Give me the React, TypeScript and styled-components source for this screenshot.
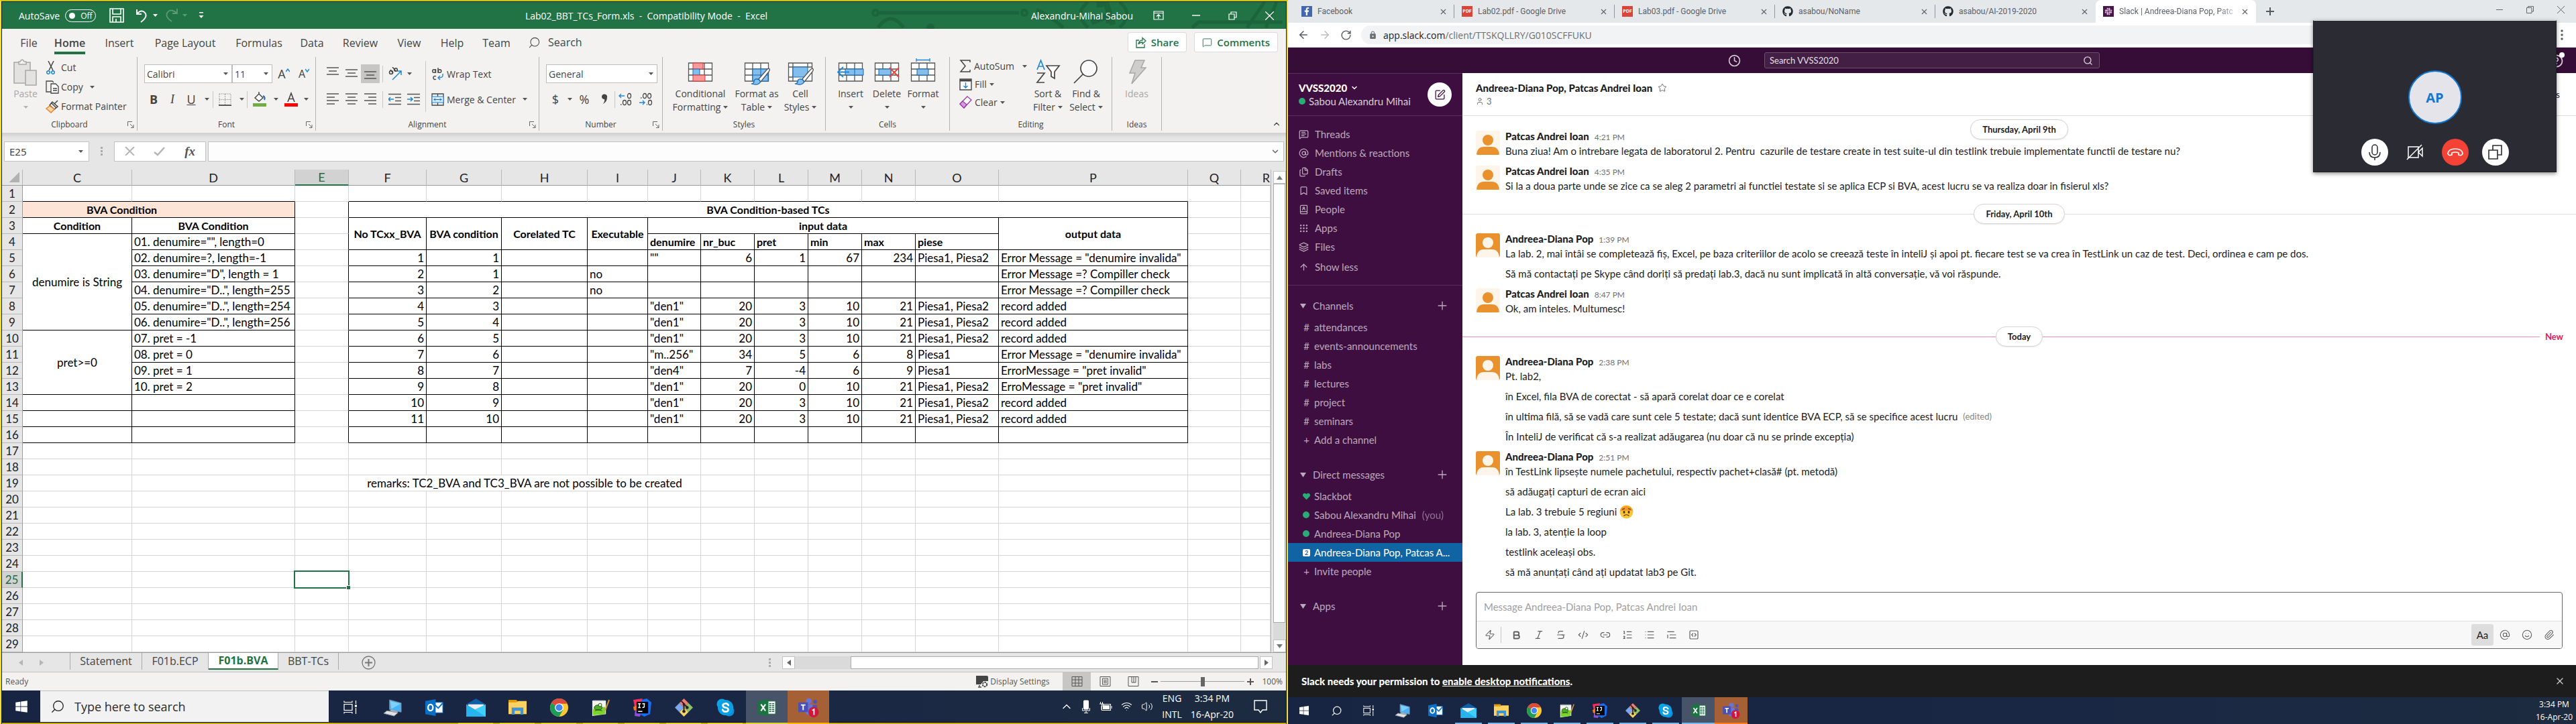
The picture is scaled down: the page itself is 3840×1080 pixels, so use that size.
import React from 'react';
import styled, { createGlobalStyle, css } from 'styled-components';
import {
  ArrowLeft, ArrowRight, ArrowUp, AtSign, Bold, Bookmark, Clock, CodeXml, Grip, Italic, Layers, Link2,
  List, ListOrdered, MessageSquareText, Paperclip, RotateCw, Search, Smile, SquarePen, SquareCode, Star, Strikethrough,
  TextQuote, User, X, Zap, Files, BookUser, Plus, ChevronDown, ChevronUp, MessageSquare, Wifi, Volume2,
} from 'lucide-react';
import { FaGithub, FaSlack, FaFacebookF, FaWindows, FaHeart } from 'react-icons/fa';
import { MdLock } from 'react-icons/md';

const UI = '"Open Sans", "Noto Sans", sans-serif';
const LATO = 'Lato, "Open Sans", sans-serif';

const Global = createGlobalStyle`
  * { box-sizing: border-box; }
  body { margin: 0; background: #000; overflow: hidden; }
  button, input, select { font: inherit; color: inherit; margin: 0; padding: 0; border: 0; background: none; outline: none; border-radius: 0; }
  svg { display: block; flex: none; }
`;

const Desktops = styled.div`
  position: relative;
  display: grid;
  grid-template-columns: 1fr 1fr;
  min-height: 100vh;
  font-family: ${UI};
`;
const Spacer = styled.span<{ $w?: number }>`
  flex: ${p => (p.$w ? `0 0 ${p.$w}px` : '1')};
`;
/* magnifier with its handle at the lower left */
const Magnifier = styled(Search)`
  transform: scaleX(-1);
`;

/* ───────── shared taskbar ───────── */
const TaskbarBox = styled.footer<{ $h: number; $framed?: boolean }>`
  display: flex;
  align-items: stretch;
  height: ${p => p.$h}px;
  color: #fff;
  background: linear-gradient(90deg, #182542, #1a2744 60%, #1d2b40);
  ${p => p.$framed && css`box-shadow: inset 0 -2px #c4a90e, inset 0 -3px #000;`}
`;
const TaskSlot = styled.button<{ $w: number; $bg?: string; $line?: string; $lineW?: number; $h: number }>`
  position: relative;
  display: grid;
  place-items: center;
  width: ${p => p.$w}px;
  height: ${p => p.$h}px;
  background: ${p => p.$bg || 'transparent'};
  ${p => p.$line && css`
    &::after {
      content: '';
      position: absolute;
      bottom: 0;
      left: 50%;
      width: ${p.$lineW}px;
      margin-left: -${(p.$lineW || 0) / 2}px;
      height: 2px;
      background: ${p.$line};
    }
  `}
`;

const PcIcon = ({ s }: { s: number }) => (
  <svg width={s} height={s} viewBox="0 0 28 28">
    <path d="M9 2 L27 7 V21 L9 17Z" fill="#49b4f5" stroke="#7d8b99" strokeWidth="1" />
    <path d="M10 4 L26 8 L12 16Z" fill="#7fd0ff" />
    <path d="M12 17 L22 20 L20 24 L8 20Z" fill="#aab0b8" />
    <path d="M5 19 L22 22 L16 27 L0 23Z" fill="#dfe3e8" stroke="#8a939d" strokeWidth="1" />
  </svg>
);
const OutlookIcon = ({ s }: { s: number }) => (
  <svg width={s} height={s} viewBox="0 0 28 28">
    <rect x="14" y="6" width="13" height="16" fill="#fff" stroke="#0a72c9" />
    <path d="M14 9 L20 15 L27 7" fill="none" stroke="#0a72c9" strokeWidth="2" />
    <path d="M0 4 L16 1 V27 L0 24Z" fill="#0a6fc5" />
    <ellipse cx="8" cy="14" rx="3.8" ry="4.8" fill="none" stroke="#fff" strokeWidth="2.4" />
  </svg>
);
const MailIcon = ({ s }: { s: number }) => (
  <svg width={s + 2} height={s} viewBox="0 0 30 28">
    <path d="M0 9 L15 0 L30 9 V14 H0Z" fill="#0f5ea8" />
    <path d="M3 9 H27 V19 H3Z" fill="#eef0f2" />
    <path d="M0 9 L15 18 L30 9 V28 H0Z" fill="#27b4ee" />
    <path d="M30 9 V28 L13 17Z" fill="#3ed0fa" />
  </svg>
);
const FolderIcon = ({ s }: { s: number }) => (
  <svg width={s} height={s} viewBox="0 0 28 28">
    <path d="M0 2 H12 L14 4 V8 H0Z" fill="#e09b0a" />
    <path d="M0 6 H12 L15 4 H28 V24 H0Z" fill="#fdd160" />
    <path d="M5 25 V14 H23 V25 H18.500 V19 H9.500 V25Z" fill="#3f95d4" />
  </svg>
);
const ChromeIcon = ({ s }: { s: number }) => (
  <svg width={s} height={s} viewBox="0 0 28 28">
    <circle cx="14" cy="14" r="14" fill="#fcc934" />
    <path d="M14 14 L1.900 7 A14 14 0 0 0 14 28 L20 17.500Z" fill="#1c9c58" />
    <path d="M14 14 L1.900 7 A14 14 0 0 1 26.100 7 L26 8 H14Z" fill="#dc4a3d" />
    <circle cx="14" cy="14" r="6.600" fill="#fff" />
    <circle cx="14" cy="14" r="5.300" fill="#4285f4" />
  </svg>
);
const NotepadIcon = ({ s }: { s: number }) => (
  <svg width={s} height={s} viewBox="0 0 28 28">
    <path d="M1 3 H22 L22 24 L1 27Z" fill="#f2f4ee" />
    <path d="M2 16 L21 13 V24 L2 26Z" fill="#7bd32b" />
    <path d="M3 3 H20" stroke="#8b9298" strokeWidth="2" strokeDasharray="1 1" />
    <ellipse cx="10" cy="14" rx="6" ry="4" fill="#4fae26" stroke="#234a17" />
    <circle cx="13" cy="10" r="2.500" fill="#e5f3d7" stroke="#234a17" />
    <path d="M5 19 L10 17 L16 19" stroke="#234a17" fill="none" />
    <path d="M27 2 L21 18" stroke="#cf9528" strokeWidth="2" />
  </svg>
);
const IdeaIcon = ({ s }: { s: number }) => (
  <svg width={s} height={s} viewBox="0 0 28 28">
    <path d="M0 2 L14 0 L12 14 L2 12Z" fill="#fb2d5c" />
    <path d="M0 13 L6 10 L6 20 L1 18Z" fill="#f77a1c" />
    <path d="M3 18 L14 20 L10 28 L2 27Z" fill="#8f4fd6" />
    <path d="M13 2 L21 0 L28 6 L26 24 L17 28 L10 24Z" fill="#1a6df0" />
    <rect x="5" y="5" width="18" height="18" fill="#050505" />
    <path d="M7.500 8 H11.500 M9.500 8 V14 M7.500 14 H11.500 M14 8 H18 M17 8 V12.500 Q17 14 14 14 M7.500 20 H14" stroke="#fff" strokeWidth="1.500" fill="none" />
  </svg>
);
const GitIcon = ({ s }: { s: number }) => (
  <svg width={s} height={s} viewBox="0 0 28 28">
    <path d="M14 0 L21 7 L14 14 L7 7Z" fill="#f27b72" />
    <path d="M7 7 L14 14 L7 21 L0 14Z" fill="#7aa7f0" />
    <path d="M21 7 L28 14 L21 21 L14 14Z" fill="#8cc06a" />
    <path d="M14 14 L21 21 L14 28 L7 21Z" fill="#f5d368" />
    <path d="M10 4 L14 8 V21 M14 9 L19 13" stroke="#26231f" strokeWidth="2" fill="none" />
    <circle cx="14" cy="9" r="2" fill="#26231f" /><circle cx="19" cy="14" r="2.400" fill="#26231f" /><circle cx="14" cy="20" r="2.400" fill="#26231f" />
  </svg>
);
const SkypeIcon = ({ s }: { s: number }) => (
  <svg width={s} height={s} viewBox="0 0 28 28">
    <circle cx="8.500" cy="8.500" r="8" fill="#0aa7ea" /><circle cx="19.500" cy="19.500" r="8" fill="#0a8fdc" /><circle cx="14" cy="14" r="12" fill="#0aa0e6" />
    <path d="M18.500 10.500 Q17 7.500 14 7.700 Q9.800 8 9.900 10.800 Q10 13.200 14 14 Q18.500 15 18.300 17.500 Q18 20.400 14 20.400 Q10.500 20.400 9.500 17.300" fill="none" stroke="#fff" strokeWidth="2.700" strokeLinecap="round" />
  </svg>
);
const ExcelIcon = ({ s }: { s: number }) => (
  <svg width={s} height={s} viewBox="0 0 28 28">
    <rect x="14" y="4" width="13" height="20" fill="#fff" stroke="#1e7145" />
    <path d="M17 8 H25 M17 11 H25 M17 14 H25 M17 17 H25 M17 20 H25" stroke="#1e7145" strokeWidth="1.600" strokeDasharray="3.500 1" />
    <path d="M0 4 L16 1 V27 L0 24Z" fill="#1a7340" />
    <path d="M4.500 9 L11.500 19 M11.500 9 L4.500 19" stroke="#fff" strokeWidth="2.200" />
  </svg>
);
const TeamsIcon = ({ s }: { s: number }) => (
  <svg width={s + 4} height={s + 2} viewBox="0 0 32 30">
    <circle cx="16" cy="5" r="4.500" fill="#6a74d6" /><circle cx="26" cy="6" r="3" fill="#4b54bb" />
    <path d="M10 10 H22 V19 Q22 26 15 26 Q10 25 10 20Z" fill="#6a74d6" /><path d="M22 11 H29 V19 Q28 22 24 22Z" fill="#4b54bb" />
    <rect x="0" y="7" width="15" height="15" rx="1" fill="#4951b8" />
    <path d="M4 11 H11 M7.500 11 V19" stroke="#fff" strokeWidth="2" />
    <circle cx="23.500" cy="22" r="8" fill="#d0163c" />
    <path d="M21.500 19.500 L24.200 17.700 V26.500" stroke="#fff" strokeWidth="1.900" fill="none" />
  </svg>
);
const TaskViewIcon = ({ s }: { s: number }) => (
  <svg width={s} height={s} viewBox="0 0 20 20" fill="none" stroke="#fff" strokeWidth="1.200">
    <rect x="1" y="5.500" width="12" height="9" /><path d="M1 0.500 V2.500 H13 V0.500 M1 19.500 V17.500 H13 V19.500 M18.500 0 V5 M18.500 11 V20" /><rect x="17.500" y="7" width="2" height="2" fill="#fff" />
  </svg>
);

const APPS: { n: string; I: React.FC<{ s: number }>; run?: boolean; bg?: string; hot?: boolean }[] = [
  { n: 'This PC', I: PcIcon },
  { n: 'Outlook', I: OutlookIcon },
  { n: 'Mail', I: MailIcon, run: true },
  { n: 'File Explorer', I: FolderIcon, run: true },
  { n: 'Chrome', I: ChromeIcon, run: true },
  { n: 'Notepad++', I: NotepadIcon, run: true },
  { n: 'IntelliJ IDEA', I: IdeaIcon, run: true },
  { n: 'Git', I: GitIcon, run: true },
  { n: 'Skype', I: SkypeIcon, run: true },
  { n: 'Excel', I: ExcelIcon, run: true, bg: '#465369' },
  { n: 'Teams', I: TeamsIcon, run: true, bg: '#a56035', hot: true },
];

const TaskSearch = styled.label`
  display: flex;
  align-items: center;
  gap: 14px;
  width: 430px;
  height: 47px;
  padding-left: 15px;
  background: #f2f2f2;
  border-top: 1px solid #c4c4c4;
  color: #1f1f1f;
  font-size: 18px;
  input { flex: 1; min-width: 0; }
  input::placeholder { color: #2b2b2b; opacity: 1; }
`;
const Tray = styled.div<{ $pr: number }>`
  display: flex;
  align-items: center;
  gap: 13px;
  margin-left: auto;
  padding-right: ${p => p.$pr}px;
  height: 47px;
`;
const TrayText = styled.div<{ $s: number; $lh: number }>`
  font-size: ${p => p.$s}px;
  line-height: ${p => p.$lh}px;
  text-align: center;
  white-space: nowrap;
`;
const SmallTray = styled(Tray)`
  height: 40px;
`;

/* ───────── Excel ───────── */
const ExcelHalf = styled.section`
  display: flex;
  flex-direction: column;
  min-width: 0;
  background: #e6e6e6;
  border: solid;
  border-width: 2px 2px 0 2px;
  border-color: #c9c21a #f0dc45 #c9a90e #f2dd2e;
`;
const ExcelInner = styled.div`
  display: flex;
  flex-direction: column;
  flex: 1;
  border: 1px solid #16241c;
  border-bottom: 0;
  min-width: 0;
`;
const TitleBar = styled.header`
  position: relative;
  display: flex;
  align-items: center;
  justify-content: space-between;
  height: 40px;
  background: #217346;
  color: #fff;
  font-size: 14px;
`;
const Circuit = styled.svg`
  position: absolute;
  right: 0;
  top: 0;
`;
const Quick = styled.div`
  display: flex;
  align-items: center;
  gap: 8px;
  padding-left: 25px;
  flex: 1;
`;
const Toggle = styled.button`
  display: flex;
  align-items: center;
  gap: 8px;
  width: 46px;
  height: 19px;
  padding-left: 5px;
  border: 1px solid #fff;
  border-radius: 10px;
  font-size: 12px;
  margin-right: 12px;
  && { padding-left: 5px; }
  &::before { content: ''; width: 9px; height: 9px; border-radius: 50%; background: #fff; }
`;
const DocTitle = styled.div`
  white-space: pre;
`;
const WinSide = styled.div`
  position: relative;
  display: flex;
  align-items: center;
  justify-content: flex-end;
  flex: 1;
  gap: 42px;
  padding-right: 18px;
`;
const Owner = styled.span`
  margin-right: -12px;
`;
const RibbonTabs = styled.nav`
  display: flex;
  align-items: center;
  height: 40px;
  padding: 0 12px 0 17px;
  background: #f3f2f1;
  color: #444;
  font-size: 16px;
`;
const RTab = styled.button<{ $on?: boolean; $w: number }>`
  width: ${p => p.$w}px;
  height: 40px;
  text-align: center;
  white-space: nowrap;
  font-weight: ${p => (p.$on ? 600 : 400)};
  span { display: inline-block; height: 36px; line-height: 38px; border-bottom: ${p => (p.$on ? '4px solid #217346' : '0')}; }
`;
const RibbonSearch = styled.label`
  display: flex;
  align-items: center;
  gap: 11px;
  padding-left: 13px;
  input { width: 120px; }
  input::placeholder { color: #444; opacity: 1; }
`;
const Pill = styled.button`
  display: flex;
  align-items: center;
  justify-content: center;
  gap: 7px;
  height: 30px;
  padding: 0 11px;
  margin-left: 11px;
  background: #fff;
  border: 1px solid #dcdad8;
  border-radius: 3px;
  color: #217346;
  font-size: 15px;
  font-weight: 600;
`;
const Ribbon = styled.div`
  display: flex;
  height: 115px;
  background: #f3f2f1;
  color: #444;
  font-size: 14px;
`;
const Group = styled.section<{ $w: number }>`
  display: flex;
  flex-direction: column;
  width: ${p => p.$w}px;
  height: 110px;
  margin-top: 2px;
  border-right: 1px solid #b5b3b1;
`;
const GBody = styled.div<{ $pl?: number }>`
  display: flex;
  align-items: flex-start;
  height: 92px;
  padding-left: ${p => p.$pl || 0}px;
`;
const GLabel = styled.div`
  position: relative;
  height: 18px;
  line-height: 18px;
  text-align: center;
  font-size: 12px;
`;
const Launch = styled.button`
  position: absolute;
  right: 4px;
  top: 4px;
`;
const Big = styled.button<{ $w: number; $dim?: boolean }>`
  display: flex;
  flex-direction: column;
  align-items: center;
  width: ${p => p.$w}px;
  height: 92px;
  color: ${p => (p.$dim ? '#a9a7a5' : 'inherit')};
  line-height: 20px;
  white-space: nowrap;
  svg.art { height: 38px; width: 40px; margin: 2px 0 5px; overflow: visible; }
`;
const BigLine = styled.span`
  display: flex;
  align-items: center;
  gap: 4px;
  height: 20px;
`;
const Stack = styled.div<{ $pt?: number; $pl?: number; $w?: number; $h: number }>`
  display: flex;
  flex-direction: column;
  ${p => p.$w && css`width: ${p.$w}px;`}
  padding: ${p => p.$pt || 0}px 0 0 ${p => p.$pl || 0}px;
  > * { height: ${p => p.$h}px; }
`;
const Small = styled.button<{ $gap?: number }>`
  display: flex;
  align-items: center;
  gap: ${p => p.$gap ?? 2}px;
  white-space: nowrap;
`;
const IconRow = styled.div`
  display: flex;
  align-items: center;
`;
const IconBtn = styled.button<{ $w?: number; $on?: boolean; $s?: number }>`
  display: flex;
  align-items: center;
  justify-content: center;
  width: ${p => p.$w || 28}px;
  height: 28px;
  font-size: ${p => p.$s || 18}px;
  background: ${p => (p.$on ? '#c8c6c4' : 'transparent')};
  i { font-family: "Liberation Serif", serif; }
`;
const CollapseBtn = styled(IconBtn)`
  margin: 88px 0 0 auto;
`;
const AddSheet = styled(IconBtn)`
  margin-left: 30px;
`;
const Rule = styled.span<{ $h?: number; $c?: string }>`
  width: 1px;
  height: ${p => p.$h || 25}px;
  background: ${p => p.$c || '#c9c7c5'};
`;
const TallRule = styled(Rule)`
  margin: 6px 0 0 4px;
`;
const Picker = styled.div<{ $w: number }>`
  position: relative;
  display: flex;
  align-items: center;
  width: ${p => p.$w}px;
  height: 28px;
  background: #fff;
  border: 1px solid #bfbdbb;
  select { appearance: none; flex: 1; height: 26px; padding-left: 3px; font-size: 14px; }
  svg { position: absolute; right: 5px; top: 11px; pointer-events: none; }
`;

const Caret = ({ c = '#555' }: { c?: string }) => (
  <svg width="7" height="4" viewBox="0 0 7 4"><path d="M0 0 H7 L3.500 4Z" fill={c} /></svg>
);
const LaunchIcon = () => (
  <svg width="10" height="10" viewBox="0 0 10 10" fill="none" stroke="#666"><path d="M0.500 7 V0.500 H7 M4 4 L9 9 M9 5 V9.500 H5" /></svg>
);
const ShareIcon = () => (
  <svg width="16" height="17" viewBox="0 0 16 17" fill="none" stroke="#217346" strokeWidth="1.300"><path d="M5 5 H1 V16 H13 V11 M4 11 Q5 5 10 5 V1.500 L15 6 L10 10.500 V8 Q6 8 4 11Z" /></svg>
);
const GridArt = ({ children }: { children?: React.ReactNode }) => (
  <svg className="art" viewBox="0 0 40 38">
    <path d="M2.500 7 H37.500 V34 H2.500Z" fill="#fff" />
    <path d="M2.500 7 H37.500 V34 H2.500Z M2.500 16 H37.500 M2.500 25 H37.500 M14 7 V34 M26 7 V34" fill="none" stroke="#555" strokeWidth="1.300" />
    {children}
  </svg>
);
const Brush = () => (
  <g>
    <path d="M39 16 Q38 14 35 17 L22 32 L26 35 L38 20 Q40 17 39 16Z" fill="#fff" stroke="#555" strokeWidth="1.300" />
    <path d="M12 38 Q16 38 16 34 Q17 30 21 31 Q26 32 25 36 Q22 41 12 38Z" fill="#83beec" stroke="#1068b4" strokeWidth="1.300" />
  </g>
);
const Lines = ({ a, y = 0 }: { a: 'l' | 'c' | 'r' | 't'; y?: number }) => {
  const rows = a === 't' ? [[0, 18], [3, 15], [0, 18]] : a === 'l' ? [[0, 18], [0, 12], [0, 18], [0, 12]] : a === 'c' ? [[0, 18], [3, 15], [0, 18], [3, 15]] : [[0, 18], [6, 18], [0, 18], [6, 18]];
  return (
    <svg width="18" height="22" viewBox="0 0 18 22" stroke="#555" strokeWidth="1.500">
      {rows.map(([x1, x2], i) => <path key={i} d={`M${x1} ${(a === 't' ? 5 + y : 3) + i * 5} H${x2}`} />)}
    </svg>
  );
};
const Indent = ({ right }: { right?: boolean }) => (
  <svg width="19" height="18" viewBox="0 0 19 18" stroke="#555" strokeWidth="1.500" fill="none">
    <path d="M0 1.500 H19 M10 6.500 H19 M10 11.500 H19 M0 16.500 H19" />
    <path d={right ? 'M0 9 H8 M5 6 L8 9 L5 12' : 'M8 9 H0 M3 6 L0 9 L3 12'} stroke="#1d86d6" />
  </svg>
);

const FormulaBar = styled.div`
  display: flex;
  align-items: center;
  height: 55px;
  padding: 0 3px 0 3px;
  background: linear-gradient(#cfcfcf, #e6e6e6 8px);
`;
const NameBox = styled.div`
  display: flex;
  align-items: center;
  width: 127px;
  height: 30px;
  padding: 0 8px 0 7px;
  background: #fff;
  border: 1px solid #c3c3c3;
  font-size: 15px;
  color: #333;
  input { flex: 1; min-width: 0; }
`;
const Dots = styled.span`
  width: 3px;
  height: 13px;
  margin: 0 17px;
  background: repeating-linear-gradient(#aaa 0 3px, transparent 3px 5px);
`;
const FxBox = styled.div`
  display: flex;
  align-items: center;
  justify-content: space-between;
  width: 137px;
  height: 30px;
  padding: 0 15px;
  background: #fff;
  border: 1px solid #c3c3c3;
`;
const Fx = styled.i`
  font: italic 600 19px "Liberation Serif", serif;
  color: #555;
`;
const FormulaInput = styled.div`
  display: flex;
  align-items: center;
  flex: 1;
  height: 30px;
  margin-left: 3px;
  padding-right: 5px;
  background: #fdfdfd;
  border: 1px solid #c3c3c3;
  input { flex: 1; }
`;

const SheetArea = styled.div`
  display: flex;
  align-items: flex-start;
  height: 720px;
`;
const Grid = styled.table`
  flex: 1;
  min-width: 0;
  table-layout: fixed;
  border-collapse: separate;
  border-spacing: 0;
  font: 17px/23px ${LATO};
  color: #000;
  background: #fff;
  th, td { height: 24px; padding: 0; }
`;
const Col = styled.col<{ $w: number }>`
  width: ${p => p.$w}px;
`;
const ColHead = styled.th<{ $on?: boolean; $end?: boolean }>`
  font-size: 18px;
  font-weight: 400;
  color: ${p => (p.$on ? '#1f6b41' : '#222')};
  background: ${p => (p.$on ? '#d2d2d2' : '#e6e6e6')};
  border-right: 1px solid ${p => (p.$end ? 'transparent' : '#b8b8b8')};
  border-bottom: ${p => (p.$on ? '2px solid #217346' : '1px solid #9b9b9b')};
  text-align: ${p => (p.$end ? 'right' : 'center')};
  line-height: 22px;
`;
const Corner = styled(ColHead)`
  background: linear-gradient(135deg, #e6e6e6 50%, #b2b2b2 50%) 10px 3px / 16px 16px no-repeat #e6e6e6;
`;
const RowHead = styled.th<{ $on?: boolean }>`
  font-weight: 400;
  text-align: center;
  color: ${p => (p.$on ? '#1f6b41' : '#222')};
  background: ${p => (p.$on ? '#d2d2d2' : '#e6e6e6')};
  border-bottom: 1px solid #b8b8b8;
  border-right: ${p => (p.$on ? '2px solid #217346' : '1px solid #9b9b9b')};
`;
type CellProps = { $r?: boolean; $b?: boolean; $bold?: boolean; $al?: string; $bg?: string; $pr?: number };
const Cell = styled.td<CellProps>`
  && { padding: 0 ${p => p.$pr ?? 3}px 0 3px; }
  border-right: 1px solid ${p => (p.$r ? '#000' : '#d4d4d4')};
  border-bottom: 1px solid ${p => (p.$b ? '#000' : '#d4d4d4')};
  font-size: ${p => (p.$bold ? 16 : 17)}px;
  font-weight: ${p => (p.$bold ? 700 : 400)};
  text-align: ${p => p.$al || 'left'};
  background: ${p => p.$bg || 'transparent'};
  white-space: nowrap;
`;
const Selected = styled.td`
  position: relative;
  border-right: 1px solid #d4d4d4;
  border-bottom: 1px solid #d4d4d4;
  &::before { content: ''; position: absolute; inset: -2px; border: 2px solid #217346; }
  &::after { content: ''; position: absolute; right: -3px; bottom: -3px; width: 5px; height: 5px; background: #217346; border: solid #fff; border-width: 1px 0 0 1px; }
`;
const VScroll = styled.div`
  display: flex;
  flex-direction: column;
  width: 23px;
  height: 720px;
  padding: 2px 1px 0 3px;
  background: #e6e6e6;
  border-left: 1px solid #b8b8b8;
`;
const ScrollBtn = styled.button`
  display: grid;
  place-items: center;
  width: 19px;
  height: 19px;
  background: #fff;
  border: 1px solid #c3c3c3;
`;
const VTrack = styled.div`
  flex: 1;
  background: #dadada;
`;
const VThumb = styled.div`
  height: 655px;
  background: #fff;
  border: 1px solid #ababab;
`;

const HEAD = ['C', 'D', 'E', 'F', 'G', 'H', 'I', 'J', 'K', 'L', 'M', 'N', 'O', 'P', 'Q', 'R'];
const COLW = [31, 163, 243, 80, 116, 112, 128, 90, 79, 80, 80, 80, 80, 124, 282, 79];
const CONDS = [
  '01. denumire="", length=0', '02. denumire=?, length=-1', '03. denumire="D", length = 1', '04. denumire="D..", length=255',
  '05. denumire="D..", length=254', '06. denumire="D..", length=256', '07. pret = -1', '08. pret = 0', '09. pret = 1', '10. pret = 2', '', '', '',
];
const INV = 'Error Message = "denumire invalida"';
const TCS: string[][] = [
  ['1', '1', '', '', '""', '6', '1', '67', '234', 'Piesa1, Piesa2', INV],
  ['2', '1', '', 'no', '', '', '', '', '', '', 'Error Message =? Compiller check'],
  ['3', '2', '', 'no', '', '', '', '', '', '', 'Error Message =? Compiller check'],
  ['4', '3', '', '', '"den1"', '20', '3', '10', '21', 'Piesa1, Piesa2', 'record added'],
  ['5', '4', '', '', '"den1"', '20', '3', '10', '21', 'Piesa1, Piesa2', 'record added'],
  ['6', '5', '', '', '"den1"', '20', '3', '10', '21', 'Piesa1, Piesa2', 'record added'],
  ['7', '6', '', '', '"m..256"', '34', '5', '6', '8', 'Piesa1', INV],
  ['8', '7', '', '', '"den4"', '7', '-4', '6', '9', 'Piesa1', 'ErrorMessage = "pret invalid"'],
  ['9', '8', '', '', '"den1"', '20', '0', '10', '21', 'Piesa1, Piesa2', 'ErroMessage = "pret invalid"'],
  ['10', '9', '', '', '"den1"', '20', '3', '10', '21', 'Piesa1, Piesa2', 'record added'],
  ['11', '10', '', '', '"den1"', '20', '3', '10', '21', 'Piesa1, Piesa2', 'record added'],
  ['', '', '', '', '', '', '', '', '', '', ''],
];
const NUMERIC = [0, 1, 5, 6, 7, 8];

const blanks = (n: number, key: string, props: CellProps = {}) =>
  Array.from({ length: n }, (_, i) => <Cell key={key + i} {...props} />);

function SheetRow({ n }: { n: number }) {
  const head = <RowHead scope="row" $on={n === 25}>{n}</RowHead>;
  const box = { $r: true, $b: true };
  if (n === 1) return <tr>{head}<Cell $b /><Cell $b /><Cell />{blanks(11, 'a', { $b: true })}{blanks(2, 'z')}</tr>;
  if (n === 2) return (
    <tr>{head}<Cell {...box} colSpan={2} $bold $al="center" $bg="#fce4d6" $pr={113}>BVA Condition</Cell><Cell $r />
      <Cell {...box} colSpan={11} $bold $al="center">BVA Condition-based TCs</Cell>{blanks(2, 'z')}</tr>
  );
  if (n === 3) return (
    <tr>{head}<Cell {...box} $bold $al="center">Condition</Cell><Cell {...box} $bold $al="center">BVA Condition</Cell><Cell $r />
      {['No TCxx_BVA', 'BVA condition', 'Corelated TC', 'Executable'].map(t => <Cell key={t} {...box} rowSpan={2} $bold $al="center">{t}</Cell>)}
      <Cell {...box} colSpan={6} $bold $al="center">input data</Cell><Cell {...box} rowSpan={2} $bold $al="center">output data</Cell>{blanks(2, 'z')}</tr>
  );
  if (n <= 16) return (
    <tr>{head}
      {n === 4 && <Cell {...box} rowSpan={6} $al="center">denumire is String</Cell>}
      {n === 10 && <Cell {...box} rowSpan={4} $al="center">pret&gt;=0</Cell>}
      {n >= 14 && <Cell {...box} />}
      <Cell {...box}>{CONDS[n - 4]}</Cell><Cell $r />
      {n === 4
        ? ['denumire', 'nr_buc', 'pret', 'min', 'max', 'piese'].map(t => <Cell key={t} {...box} $bold>{t}</Cell>)
        : TCS[n - 5].map((t, i) => <Cell key={i} {...box} $al={NUMERIC.includes(i) ? 'right' : 'left'}>{t}</Cell>)}
      {blanks(2, 'z')}
    </tr>
  );
  if (n === 19) return <tr>{head}{blanks(3, 'a')}<Cell colSpan={5} $al="center">remarks: TC2_BVA and TC3_BVA are not possible to be created</Cell>{blanks(8, 'z')}</tr>;
  if (n === 25) return <tr>{head}{blanks(2, 'a')}<Selected />{blanks(13, 'z')}</tr>;
  return <tr>{head}{blanks(16, 'a')}</tr>;
}

const SheetTabs = styled.div`
  display: flex;
  align-items: flex-start;
  height: 30px;
  background: #e6e6e6;
  border-top: 1px solid #9b9b9b;
  border-bottom: 1px solid #c3c3c3;
  color: #444;
  font-size: 16px;
`;
const TabArrows = styled.div`
  display: flex;
  gap: 25px;
  width: 101px;
  height: 28px;
  padding-left: 25px;
  align-items: center;
`;
const STab = styled.button<{ $w: number; $on?: boolean }>`
  width: ${p => p.$w}px;
  height: 25px;
  line-height: 21px;
  white-space: nowrap;
  && { border-right: 1px solid #ababab; }
  ${p => p.$on && css`
    background: #fff;
    color: #217346;
    font-weight: 700;
    && { border-bottom: 2px solid #217346; }
  `}
`;
const HScroll = styled.div`
  display: flex;
  align-items: center;
  margin-left: auto;
  height: 28px;
  padding-right: 20px;
`;
const HTrack = styled.div`
  display: flex;
  justify-content: flex-end;
  width: 691px;
  height: 19px;
  margin-right: 2px;
  background: #dadada;
`;
const HThumb = styled.div`
  width: 608px;
  background: #fff;
  border: 1px solid #ababab;
`;
const Status = styled.div`
  display: flex;
  align-items: center;
  height: 27px;
  padding: 0 5px;
  background: #f3f2f1;
  color: #555;
  font-size: 12px;
`;
const DisplaySettings = styled(Small)`
  margin: 0 20px 0 auto;
`;
const Zoom = styled.input`
  appearance: none;
  width: 125px;
  height: 14px;
  background: linear-gradient(#a0a0a0, #a0a0a0) center / 100% 1px no-repeat;
  &::-webkit-slider-thumb { appearance: none; width: 6px; height: 14px; background: #666; }
`;
const ViewBtn = styled.button<{ $on?: boolean }>`
  display: grid;
  place-items: center;
  width: 42px;
  height: 27px;
  background: ${p => (p.$on ? '#c8c6c4' : 'transparent')};
`;

const RIBBON_TABS: [string, number][] = [['File', 46], ['Home', 76], ['Insert', 72], ['Page Layout', 124], ['Formulas', 96], ['Data', 62], ['Review', 82], ['View', 64], ['Help', 64], ['Team', 68]];

function Excel() {
  return (
    <ExcelHalf>
      <ExcelInner>
        <TitleBar>
          <Circuit width="620" height="40" viewBox="0 0 620 40" fill="none" stroke="#1c643c" strokeWidth="5">
            <circle cx="8" cy="16" r="4" strokeWidth="4" /><path d="M14 16 H222" /><circle cx="230" cy="16" r="4" strokeWidth="4" />
            <path d="M248 12 Q262 16 288 38 M12 38 Q30 12 50 38" /><circle cx="90" cy="38" r="6" fill="#1c643c" stroke="none" />
            <path d="M325 0 Q302 18 325 38 M372 0 Q394 18 372 38" /><path d="M342 8 V2 H352 L362 34 M330 30 L356 20 V32" strokeWidth="9" />
            <path d="M480 38 L490 30 H615 M562 38 L588 0 M590 38 L606 0" />
          </Circuit>
          <Quick>
            AutoSave
            <Toggle>Off</Toggle>
            <svg width="22" height="22" viewBox="0 0 22 22" fill="none" stroke="#fff" strokeWidth="1.600"><path d="M1 1 H21 V21 H1Z M5 1 V9 H17 V1 M5 21 V13 H17 V21 M10 21 V16" /></svg>
            <svg width="44" height="22" viewBox="0 0 44 22" fill="none" stroke="#fff" strokeWidth="2"><path d="M11 2 V9 H18 M11 9 Q17 2 22 6 Q29 12 17 21" /><path d="M35 9 H42 L38.500 13Z" fill="#fff" stroke="none" /></svg>
            <svg width="36" height="22" viewBox="0 0 36 22" fill="none" stroke="#5d9a77" strokeWidth="1.800"><path d="M19 1 V8 H12 M19 8 Q10 0 5 6 Q0 13 11 20" /><path d="M27 9 H34 L30.500 13Z" fill="#5d9a77" stroke="none" /></svg>
            <svg width="20" height="10" viewBox="0 0 20 10" fill="#fff"><path d="M8 0 H14 V1.500 H8Z M7.500 5 H14.500 L11 9Z" /></svg>
          </Quick>
          <DocTitle>Lab02_BBT_TCs_Form.xls  -  Compatibility Mode  -  Excel</DocTitle>
          <WinSide>
            <Owner>Alexandru-Mihai Sabou</Owner>
            <svg width="16" height="14" viewBox="0 0 16 14" fill="none" stroke="#fff" strokeWidth="1.200"><path d="M1 1 H15 V13 H1Z M1 3.500 H15 M8 12 V6 M5 8.500 L8 5.500 L11 8.500" /></svg>
            <svg width="12" height="12" viewBox="0 0 12 12"><path d="M0 6 H12" stroke="#fff" strokeWidth="1.400" /></svg>
            <svg width="13" height="13" viewBox="0 0 13 13" fill="none" stroke="#fff" strokeWidth="1.200"><path d="M1 4 H9 V12 H1Z M4 4 V1 H12 V9 H9" /></svg>
            <svg width="13" height="13" viewBox="0 0 13 13" stroke="#fff" strokeWidth="1.300"><path d="M0 0 L13 13 M13 0 L0 13" /></svg>
          </WinSide>
        </TitleBar>

        <RibbonTabs>
          {RIBBON_TABS.map(([t, w]) => <RTab key={t} $w={w} $on={t === 'Home'}><span>{t}</span></RTab>)}
          <RibbonSearch>
            <Magnifier size={19} strokeWidth={1.300} />
            <input aria-label="Search" placeholder="Search" />
          </RibbonSearch>
          <Spacer />
          <Pill><ShareIcon />Share</Pill>
          <Pill><MessageSquare size={15} strokeWidth={1.500} />Comments</Pill>
        </RibbonTabs>

        <Ribbon>
          <Group $w={202}>
            <GBody $pl={14}>
              <Big $w={42} $dim>
                <svg className="art" viewBox="0 0 40 38" fill="#e3e2e1" stroke="#aaa8a6" strokeWidth="1.600">
                  <path d="M3 6 H27 V37 H3Z" /><path d="M10 9 V5 H12 Q15 -1 18 5 H21 V9Z" fill="#f3f2f1" /><path d="M20 18 H36 V40 H20Z" />
                </svg>
                <BigLine>Paste</BigLine><BigLine><Caret c="#b5b3b1" /></BigLine>
              </Big>
              <Stack $h={29} $pt={1}>
                <Small $gap={8}>
                  <svg width="24" height="20" viewBox="0 0 24 20" fill="none" strokeWidth="1.500"><path d="M13 0 L20 14 M21 0 L14 14" stroke="#444" /><circle cx="13" cy="17" r="2.300" stroke="#1d86d6" /><circle cx="20" cy="17" r="2.300" stroke="#1d86d6" /></svg>Cut
                </Small>
                <Small $gap={2}>
                  <svg width="30" height="20" viewBox="0 0 30 20" fill="none" stroke="#444" strokeWidth="1.300"><path d="M17 17 H10 V1 H19 L21 3" /><path d="M17 5 H24 L28 9 V19 H17Z" fill="#fff" /><path d="M20 12 H26 M20 15 H26" /></svg>Copy<Spacer $w={6} /><Caret />
                </Small>
                <Small $gap={2}>
                  <svg width="30" height="20" viewBox="0 0 30 20" fill="none" strokeWidth="1.500"><path d="M27 1 L22 6 M17 4 L25 12 M15 8 L19 3 L27 10 L22 14Z" stroke="#444" /><path d="M15 9 L10 13 L17 19 L22 14Z" fill="#ffd9a8" stroke="#e8872a" /></svg>Format Painter
                </Small>
              </Stack>
            </GBody>
            <GLabel>Clipboard<Launch aria-label="Clipboard options"><LaunchIcon /></Launch></GLabel>
          </Group>

          <Group $w={266}>
            <GBody $pl={10}>
              <Stack $h={38} $pt={6}>
                <IconRow>
                  <Picker $w={131}><select aria-label="Font"><option>Calibri</option></select><Caret /></Picker>
                  <Picker $w={60}><select aria-label="Font size"><option>11</option></select><Caret /></Picker>
                  <IconBtn $w={34}>A<svg width="6" height="16" viewBox="0 0 6 16"><path d="M0 5 L3 1 L6 5" fill="none" stroke="#1d86d6" strokeWidth="1.500" /></svg></IconBtn>
                  <IconBtn $w={26} $s={16}>A<svg width="6" height="16" viewBox="0 0 6 16"><path d="M0 1 L3 5 L6 1" fill="none" stroke="#1d86d6" strokeWidth="1.500" /></svg></IconBtn>
                </IconRow>
                <IconRow>
                  <IconBtn><b>B</b></IconBtn>
                  <IconBtn><i>I</i></IconBtn>
                  <IconBtn><u>U</u></IconBtn>
                  <IconBtn $w={18}><Caret /></IconBtn>
                  <Rule />
                  <IconBtn $w={34}><svg width="19" height="19" viewBox="0 0 19 19" fill="none" stroke="#888" strokeDasharray="1.500 1.500"><path d="M1 1 H18 V17 M1 1 V17 M9.500 1 V17 M1 9.500 H18" /><path d="M0 18 H19" stroke="#333" strokeDasharray="none" strokeWidth="1.600" /></svg></IconBtn>
                  <IconBtn $w={16}><Caret /></IconBtn>
                  <Rule />
                  <IconBtn $w={36}><svg width="20" height="22" viewBox="0 0 20 22"><path d="M3 9 L9 3 L15 9 L9 14Z M9 3 V0" fill="#fff" stroke="#444" strokeWidth="1.400" /><path d="M15 6 Q19 8 17 12" stroke="#1d68b4" strokeWidth="2" fill="none" /><rect y="17" width="20" height="5" fill="#70ad47" /></svg></IconBtn>
                  <IconBtn $w={12}><Caret /></IconBtn>
                  <IconBtn $w={34}><svg width="20" height="22" viewBox="0 0 20 22"><path d="M5 15 L10 2 L15 15 M7 10.500 H13" fill="none" stroke="#444" strokeWidth="1.600" /><rect y="17" width="20" height="5" fill="#f00" /></svg></IconBtn>
                  <IconBtn $w={10}><Caret /></IconBtn>
                </IconRow>
              </Stack>
            </GBody>
            <GLabel>Font<Launch aria-label="Font options"><LaunchIcon /></Launch></GLabel>
          </Group>

          <Group $w={333}>
            <GBody $pl={11}>
              <Stack $h={38} $pt={6}>
                <IconRow>
                  <IconBtn><Lines a="t" y={-3} /></IconBtn><IconBtn><Lines a="t" y={0} /></IconBtn><IconBtn $on><Lines a="t" y={3} /></IconBtn>
                  <IconBtn $w={8}><Rule /></IconBtn>
                  <IconBtn $w={30}><svg width="21" height="20" viewBox="0 0 21 20" fill="none" strokeWidth="1.500"><path d="M6 19 L19 6 M13 6 H19 V12" stroke="#1d86d6" /><circle cx="4" cy="8" r="2.500" stroke="#444" /><path d="M3 4 L7 9 M6 0 L11 6" stroke="#444" /><circle cx="11" cy="4" r="2.300" stroke="#444" /></svg></IconBtn>
                  <IconBtn $w={12}><Caret /></IconBtn>
                </IconRow>
                <IconRow>
                  <IconBtn><Lines a="l" /></IconBtn><IconBtn><Lines a="c" /></IconBtn><IconBtn><Lines a="r" /></IconBtn>
                  <IconBtn $w={8}><Rule /></IconBtn>
                  <IconBtn><Indent /></IconBtn><IconBtn><Indent right /></IconBtn>
                </IconRow>
              </Stack>
              <TallRule $h={76} />
              <Stack $h={38} $pt={6} $pl={8}>
                <Small $gap={3}>
                  <svg width="20" height="20" viewBox="0 0 20 20" fill="none" strokeWidth="1.400"><g stroke="#444"><circle cx="4" cy="6" r="2.300" /><path d="M6.500 3 V9 M10 1 V9 M7 14 A2.500 2.500 0 1 0 7 18" /><circle cx="12.500" cy="6" r="2.300" /></g><path d="M17 10 V13 Q17 16 10 16 M13 13 L10 16 L13 19" stroke="#1d86d6" /></svg>Wrap Text
                </Small>
                <Small $gap={4}>
                  <svg width="19" height="19" viewBox="0 0 19 19" fill="none"><path d="M1 1 H18 V18 H1Z M9.500 1 V5 M9.500 14 V18" stroke="#444" strokeWidth="1.300" /><rect x="1" y="5" width="17" height="9" fill="#d6eafa" stroke="#1d86d6" /><path d="M4 9.500 H15 M6 7.500 L4 9.500 L6 11.500 M13 7.500 L15 9.500 L13 11.500" stroke="#1068b4" /></svg>Merge &amp; Center<Spacer $w={2} /><Caret />
                </Small>
              </Stack>
            </GBody>
            <GLabel>Alignment<Launch aria-label="Alignment options"><LaunchIcon /></Launch></GLabel>
          </Group>

          <Group $w={184}>
            <GBody $pl={10}>
              <Stack $h={38} $pt={6}>
                <IconRow><Picker $w={166}><select aria-label="Number format"><option>General</option></select><Caret /></Picker></IconRow>
                <IconRow>
                  <IconBtn $w={28}>$</IconBtn><IconBtn $w={14}><Caret /></IconBtn><IconBtn $w={30}>%</IconBtn>
                  <IconBtn $w={30}><svg width="11" height="16" viewBox="0 0 11 16"><path d="M1 4 A4 4 0 1 1 9 5 Q9 12 3 15 Q6 11 5 8 Q1 8 1 4Z" fill="#444" /></svg></IconBtn>
                  <Rule />
                  <IconBtn $w={30}><svg width="21" height="20" viewBox="0 0 21 20" fill="none" stroke="#444" strokeWidth="1.300"><path d="M9 5 H1 M4 2 L1 5 L4 8" stroke="#1d86d6" /><ellipse cx="16" cy="5" rx="2.500" ry="3.500" /><ellipse cx="9" cy="15" rx="2.500" ry="3.500" /><ellipse cx="16" cy="15" rx="2.500" ry="3.500" /><path d="M3 18 H4.500" /></svg></IconBtn>
                  <IconBtn $w={30}><svg width="21" height="20" viewBox="0 0 21 20" fill="none" stroke="#444" strokeWidth="1.300"><ellipse cx="9" cy="5" rx="2.500" ry="3.500" /><ellipse cx="16" cy="5" rx="2.500" ry="3.500" /><path d="M3 8 H4.500 M12 18 H13" /><path d="M1 15 H9 M6 12 L9 15 L6 18" stroke="#1d86d6" /><ellipse cx="17" cy="15" rx="2.500" ry="3.500" /></svg></IconBtn>
                </IconRow>
              </Stack>
            </GBody>
            <GLabel>Number<Launch aria-label="Number options"><LaunchIcon /></Launch></GLabel>
          </Group>

          <Group $w={243}>
            <GBody $pl={10}>
              <Big $w={92}>
                <GridArt><rect x="9" y="7" width="15" height="9" fill="#f99" stroke="#d33" /><rect x="9" y="16" width="10" height="9" fill="#83beec" stroke="#1068b4" /><rect x="9" y="25" width="18" height="9" fill="#f99" stroke="#d33" /></GridArt>
                <BigLine>Conditional</BigLine><BigLine>Formatting<Caret /></BigLine>
              </Big>
              <Big $w={76}>
                <GridArt><rect x="14" y="16" width="23" height="18" fill="#83beec" stroke="#1068b4" /><path d="M14 25 H37 M26 16 V34" stroke="#1068b4" /><Brush /></GridArt>
                <BigLine>Format as</BigLine><BigLine>Table<Caret /></BigLine>
              </Big>
              <Big $w={54}>
                <svg className="art" viewBox="0 0 40 38"><path d="M2.500 7 H37.500 V34 H2.500Z M2.500 13 H37.500 M9 7 V34 M31 7 V13 M2.500 28 H9" fill="#fff" stroke="#555" strokeWidth="1.300" /><rect x="9" y="13" width="22" height="15" fill="#83beec" stroke="#1068b4" /><Brush /></svg>
                <BigLine>Cell</BigLine><BigLine>Styles<Caret /></BigLine>
              </Big>
            </GBody>
            <GLabel>Styles</GLabel>
          </Group>

          <Group $w={185}>
            <GBody $pl={10}>
              <Big $w={54}>
                <GridArt><rect x="12" y="16" width="27" height="9" fill="#83beec" stroke="#1068b4" /><path d="M26 16 V25" stroke="#1068b4" /><path d="M18 20.500 H1 M9 13 L1 20.500 L9 28" fill="none" stroke="#1d86d6" strokeWidth="1.800" /></GridArt>
                <BigLine>Insert</BigLine><BigLine><Caret /></BigLine>
              </Big>
              <Big $w={54}>
                <GridArt><rect x="8" y="16" width="18" height="9" fill="#83beec" stroke="#1068b4" /><path d="M24 14 L38 28 M38 14 L24 28" stroke="#e8443a" strokeWidth="2" /></GridArt>
                <BigLine>Delete</BigLine><BigLine><Caret /></BigLine>
              </Big>
              <Big $w={54}>
                <GridArt><rect x="11" y="16" width="17" height="9" fill="#83beec" stroke="#1068b4" /><path d="M10 2.500 H30 M10 0 V5 M30 0 V5" stroke="#1d86d6" strokeWidth="1.300" /></GridArt>
                <BigLine>Format</BigLine><BigLine><Caret /></BigLine>
              </Big>
            </GBody>
            <GLabel>Cells</GLabel>
          </Group>

          <Group $w={242}>
            <GBody $pl={14}>
              <Stack $h={27} $w={104}>
                <Small $gap={4}><svg width="18" height="19" viewBox="0 0 18 19"><path d="M16 4 V1 H2 L9 9.500 L2 18 H16 V15" fill="none" stroke="#444" strokeWidth="1.500" /></svg>AutoSum<Spacer $w={4} /><Caret /></Small>
                <Small $gap={4}><svg width="19" height="18" viewBox="0 0 19 18" fill="none" strokeWidth="1.400"><path d="M1 1 H18 V17 H1Z" fill="#fff" stroke="#444" /><path d="M1 3 H18" stroke="#444" strokeWidth="3" /><path d="M9.500 6 V14 M6.500 11 L9.500 14 L12.500 11" stroke="#1d86d6" /></svg>Fill <Caret /></Small>
                <Small $gap={4}><svg width="19" height="19" viewBox="0 0 19 19" strokeWidth="1.300"><path d="M12 1 L18 6 L7 18 L1 12Z" fill="#fff" stroke="#9b3aa8" /><path d="M5 8 L11 13 L7 18 L1 12Z" fill="#d79be0" stroke="#9b3aa8" /></svg>Clear <Caret /></Small>
              </Stack>
              <Big $w={56}>
                <svg className="art" viewBox="0 0 40 38" fill="none" strokeWidth="1.700"><path d="M4 17 L9.500 3 L15 17 M6 12 H13" stroke="#1d86d6" /><path d="M4 22 H15 L4 36 H15" stroke="#444" /><path d="M18 11 H37 L30 20 V30 L25 27 V20Z" fill="#fff" stroke="#444" /></svg>
                <BigLine>Sort &amp;</BigLine><BigLine>Filter<Caret /></BigLine>
              </Big>
              <Big $w={58}>
                <svg className="art" viewBox="0 0 40 38" fill="none" stroke="#444" strokeWidth="1.700"><circle cx="24" cy="15" r="12" fill="#fafafa" /><path d="M15.500 23.500 L2 37" /></svg>
                <BigLine>Find &amp;</BigLine><BigLine>Select<Caret /></BigLine>
              </Big>
            </GBody>
            <GLabel>Editing</GLabel>
          </Group>

          <Group $w={74}>
            <GBody>
              <Big $w={73} $dim>
                <svg className="art" viewBox="0 0 40 38"><path d="M17 3 H31 L26 14 H33 L12 38 L17 22 H9Z" fill="#cfcdcb" stroke="#a9a7a5" strokeWidth="1.500" /></svg>
                <BigLine>Ideas</BigLine>
              </Big>
            </GBody>
            <GLabel>Ideas</GLabel>
          </Group>
          <CollapseBtn aria-label="Collapse ribbon"><ChevronUp size={14} strokeWidth={2} /></CollapseBtn>
        </Ribbon>

        <FormulaBar>
          <NameBox><input aria-label="Name box" defaultValue="E25" /><Caret /></NameBox>
          <Dots />
          <FxBox>
            <svg width="15" height="13" viewBox="0 0 15 13" stroke="#b5b5b5" strokeWidth="2"><path d="M1 0 L14 13 M14 0 L1 13" /></svg>
            <svg width="18" height="14" viewBox="0 0 18 14" fill="none" stroke="#b5b5b5" strokeWidth="2.500"><path d="M1 8 L6 12 L16 1" /></svg>
            <Fx>fx</Fx>
          </FxBox>
          <FormulaInput><input aria-label="Formula bar" /><ChevronDown size={14} strokeWidth={2.500} color="#666" /></FormulaInput>
        </FormulaBar>

        <SheetArea>
          <Grid>
            <colgroup>{COLW.map((w, i) => <Col key={i} $w={w} />)}<col /></colgroup>
            <thead><tr><Corner aria-label="Select all" />{HEAD.map(h => <ColHead key={h} scope="col" $on={h === 'E'} $end={h === 'R'}>{h}</ColHead>)}</tr></thead>
            <tbody>{Array.from({ length: 29 }, (_, i) => <SheetRow key={i} n={i + 1} />)}</tbody>
          </Grid>
          <VScroll>
            <ScrollBtn aria-label="Scroll up"><svg width="9" height="6" viewBox="0 0 9 6"><path d="M4.500 0 L9 6 H0Z" fill="#777" /></svg></ScrollBtn>
            <VTrack><VThumb /></VTrack>
            <ScrollBtn aria-label="Scroll down"><svg width="9" height="6" viewBox="0 0 9 6"><path d="M4.500 6 L9 0 H0Z" fill="#777" /></svg></ScrollBtn>
          </VScroll>
        </SheetArea>

        <SheetTabs>
          <TabArrows>
            <svg width="6" height="9" viewBox="0 0 6 9"><path d="M6 0 V9 L0 4.500Z" fill="#b5b5b5" /></svg>
            <svg width="6" height="9" viewBox="0 0 6 9"><path d="M0 0 V9 L6 4.500Z" fill="#b5b5b5" /></svg>
          </TabArrows>
          <Rule $c="#ababab" />
          <STab $w={107}>Statement</STab><STab $w={99}>F01b.ECP</STab><STab $w={104} $on>F01b.BVA</STab><STab $w={90}>BBT-TCs</STab>
          <AddSheet aria-label="New sheet"><svg width="21" height="21" viewBox="0 0 21 21" fill="none" stroke="#777" strokeWidth="1.300"><circle cx="10.500" cy="10.500" r="9.500" /><path d="M5 10.500 H16 M10.500 5 V16" strokeWidth="2" /></svg></AddSheet>
          <HScroll>
            <Dots />
            <ScrollBtn aria-label="Scroll left"><svg width="6" height="9" viewBox="0 0 6 9"><path d="M6 0 V9 L0 4.500Z" fill="#666" /></svg></ScrollBtn>
            <HTrack><HThumb /></HTrack>
            <ScrollBtn aria-label="Scroll right"><svg width="6" height="9" viewBox="0 0 6 9"><path d="M0 0 V9 L6 4.500Z" fill="#666" /></svg></ScrollBtn>
          </HScroll>
        </SheetTabs>

        <Status>
          <span>Ready</span>
          <DisplaySettings>
            <svg width="20" height="18" viewBox="0 0 20 18"><path d="M1 0 H17 Q19 0 19 2 V8 H12 L8 13 H1Z" fill="#444" /><path d="M6 14 V16 M4 17 H9" stroke="#444" strokeWidth="1.500" /><circle cx="14" cy="13" r="3.200" fill="none" stroke="#444" strokeWidth="2" strokeDasharray="2.500 1" /></svg>
            Display Settings
          </DisplaySettings>
          <ViewBtn $on aria-label="Normal"><svg width="17" height="15" viewBox="0 0 17 15" fill="none" stroke="#555"><path d="M1 0.500 H16 V14.500 H1Z M1 5 H16 M1 10 H16 M6 0 V15 M11 0 V15" /></svg></ViewBtn>
          <ViewBtn aria-label="Page layout"><svg width="17" height="15" viewBox="0 0 17 15" fill="none" stroke="#555"><path d="M1 0.500 H16 V14.500 H1Z M4.500 3 H12.500 V12 H4.500Z M6 5.500 H11 M6 7.500 H11 M6 9.500 H11" /></svg></ViewBtn>
          <ViewBtn aria-label="Page break preview"><svg width="17" height="15" viewBox="0 0 17 15" fill="none" stroke="#555"><path d="M1 0.500 H16 V14.500 H1Z M6 0 V9 H12 V0 M9 0 V9" /></svg></ViewBtn>
          <svg width="20" height="12" viewBox="0 0 20 12"><path d="M6 6 H16" stroke="#555" strokeWidth="2" /></svg>
          <Zoom type="range" aria-label="Zoom" min={0} max={100} defaultValue={50} />
          <svg width="26" height="12" viewBox="0 0 26 12"><path d="M4 6 H14 M9 1 V11" stroke="#555" strokeWidth="2" /></svg>
          <span>100%</span>
        </Status>

        <TaskbarBox $h={50} $framed>
          <TaskSlot $w={57} $h={47} aria-label="Start"><FaWindows size={20} color="#fff" /></TaskSlot>
          <TaskSearch><Magnifier size={22} strokeWidth={1.400} /><input aria-label="Type here to search" placeholder="Type here to search" /></TaskSearch>
          <TaskSlot $w={64} $h={50} aria-label="Task view"><TaskViewIcon s={20} /></TaskSlot>
          {APPS.map(a => (
            <TaskSlot key={a.n} $w={62} $h={50} $bg={a.bg} $line={a.run ? (a.hot ? '#ffb400' : '#e2d22c') : undefined} $lineW={a.bg ? 62 : 52} aria-label={a.n}><a.I s={27} /></TaskSlot>
          ))}
          <Tray $pr={28}>
            <ChevronUp size={20} strokeWidth={1.500} />
            <svg width="12" height="20" viewBox="0 0 12 20" fill="none" stroke="#fff"><rect x="2.500" y="1" width="7" height="13" rx="1" fill="#fff" /><path d="M0.500 12 V16 H11.500 V12 M6 16 V19.500 M3 19.500 H9" /></svg>
            <svg width="20" height="14" viewBox="0 0 20 14" fill="none" stroke="#fff"><rect x="4.500" y="3.500" width="13" height="9" /><rect x="6.500" y="5.500" width="9" height="5" fill="#fff" /><path d="M19 6 V10 M2.500 0 V3 M5.500 0 V3 M1 3 H7 V6 H4 V12" /></svg>
            <Wifi size={17} strokeWidth={1.500} />
            <Volume2 size={18} strokeWidth={1.300} />
            <TrayText $s={14} $lh={24}>ENG<br />INTL</TrayText>
            <TrayText $s={14} $lh={24}>3:34 PM<br />16-Apr-20</TrayText>
            <Spacer $w={4} />
            <svg width="20" height="20" viewBox="0 0 20 20" fill="none" stroke="#fff" strokeWidth="1.400"><path d="M1 1 H19 V15 H13 L10 19 L7 15 H1Z" /></svg>
          </Tray>
        </TaskbarBox>
      </ExcelInner>
    </ExcelHalf>
  );
}

/* ───────── Chrome + Slack ───────── */
const ChromeHalf = styled.section`
  display: flex;
  flex-direction: column;
  min-width: 0;
  background: #fff;
`;
const TabStrip = styled.header`
  display: flex;
  height: 34px;
  padding-left: 9px;
  background: #e5e8eb;
  color: #5c6166;
  font: 12px Roboto, ${UI};
`;
const BTab = styled.button<{ $on?: boolean; $sep?: boolean }>`
  display: flex;
  align-items: center;
  gap: 8px;
  width: 239px;
  height: 34px;
  && { padding: 0 10px 0 11px; }
  text-align: left;
  background: ${p => (p.$on ? '#fff' : 'transparent')};
  && { border-radius: ${p => (p.$on ? '8px 8px 0 0' : '0')}; }
  ${p => p.$sep && css`background: linear-gradient(#8f959b, #8f959b) right center / 1px 20px no-repeat;`}
  span {
    flex: 1;
    white-space: nowrap;
    ${p => p.$on && css`mask-image: linear-gradient(90deg, #000 85%, rgba(0, 0, 0, 0.3));`}
  }
`;
const Fav = styled.i<{ $bg?: string }>`
  display: grid;
  place-items: center;
  width: 16px;
  height: 16px;
  flex: none;
  background: ${p => p.$bg || 'transparent'};
  color: #fff;
  font: 700 7px/16px ${UI};
`;
const WinBtns = styled.div`
  display: flex;
  align-items: center;
  gap: 35px;
  margin-left: auto;
  padding: 0 17px 6px 0;
`;
const UrlBar = styled.div`
  display: flex;
  align-items: center;
  gap: 14px;
  height: 37px;
  padding: 0 14px;
  border-bottom: 1px solid #d5d7da;
  color: #555a5f;
`;
const Address = styled.div`
  display: flex;
  align-items: center;
  gap: 9px;
  flex: 1;
  height: 28px;
  padding-left: 11px;
  background: #f1f3f4;
  border-radius: 14px;
  font-size: 14px;
  color: #6b7075;
  b { font-weight: 400; color: #202124; }
`;
const SlackTop = styled.div`
  display: grid;
  grid-template-columns: 1fr 500px 1fr;
  align-items: center;
  height: 38px;
  background: #350d36;
  color: #d8cdd8;
  font-family: ${LATO};
`;
const TopEnd = styled.div<{ $mr: number }>`
  justify-self: end;
  margin-right: ${p => p.$mr}px;
`;
const SlackSearch = styled.label`
  display: flex;
  align-items: center;
  height: 24px;
  padding: 0 9px 0 7px;
  background: #431f45;
  border: 1px solid #6d4f6f;
  border-radius: 3px;
  font-size: 13px;
  input { flex: 1; }
  input::placeholder { color: #e6dfe6; opacity: 1; }
`;
const SlackBody = styled.div`
  display: grid;
  grid-template-columns: 260px 1fr;
  flex: 1;
  font: 15px/22px ${LATO};
`;
const Side = styled.aside`
  background: #3f0e40;
  color: #bba9bc;
  border-top: 1px solid #5a2f5c;
`;
const Team = styled.div`
  display: flex;
  align-items: center;
  justify-content: space-between;
  height: 63px;
  padding: 0 16px;
  border-bottom: 1px solid #553058;
`;
const TeamName = styled.div<{ $me?: boolean }>`
  display: flex;
  align-items: center;
  gap: 5px;
  color: ${p => (p.$me ? '#d8cdd8' : '#fff')};
  font-weight: ${p => (p.$me ? 400 : 900)};
  line-height: 20px;
`;
const Compose = styled.button`
  display: grid;
  place-items: center;
  width: 36px;
  height: 36px;
  && { border-radius: 50%; }
  background: #fff;
  color: #3f0e40;
`;
const NavList = styled.nav<{ $pt?: number; $pb?: number; $line?: boolean }>`
  display: flex;
  flex-direction: column;
  padding: ${p => p.$pt || 0}px 0 ${p => p.$pb || 0}px;
  ${p => p.$line && css`border-bottom: 1px solid #553058;`}
`;
const NavItem = styled.button<{ $on?: boolean; $gap?: number; $pl?: number; $mt?: number }>`
  display: flex;
  align-items: center;
  gap: ${p => p.$gap ?? 6}px;
  height: 28px;
  && { padding: 0 16px 0 ${p => p.$pl ?? 22}px; margin-top: ${p => p.$mt || 0}px; }
  text-align: left;
  white-space: nowrap;
  background: ${p => (p.$on ? '#1164a3' : 'transparent')};
  color: ${p => (p.$on ? '#fff' : 'inherit')};
  small { font-size: 15px; opacity: 0.65; margin-left: 2px; }
`;
const Mark = styled.i`
  display: grid;
  place-items: center;
  width: 11px;
  font-style: normal;
`;
const Dot = styled.i`
  width: 10px;
  height: 10px;
  border-radius: 50%;
  background: #2bac76;
`;
const Badge = styled.i`
  width: 11px;
  height: 11px;
  border-radius: 2px;
  background: #fff;
  color: #1164a3;
  font: 700 9px/11px ${LATO};
  text-align: center;
`;
const SecHead = styled.div`
  display: flex;
  align-items: center;
  gap: 10px;
  height: 36px;
  padding: 0 20px 0 18px;
  button { margin-left: auto; }
`;
const Main = styled.main`
  display: flex;
  flex-direction: column;
  min-width: 0;
  color: #1d1c1d;
`;
const ChanHead = styled.header`
  display: flex;
  align-items: center;
  justify-content: space-between;
  height: 64px;
  padding: 0 24px 0 20px;
  border-bottom: 1px solid #dddddd;
  h1 { display: flex; align-items: center; gap: 8px; margin: 0; font-size: 15px; font-weight: 900; line-height: 20px; }
  p { display: flex; align-items: center; gap: 4px; margin: 0; font-size: 13px; line-height: 20px; color: #717071; }
  button { font-size: 13px; }
`;
const Feed = styled.div`
  flex: 1;
`;
const Divider = styled.div<{ $c?: string; $bare?: boolean }>`
  display: grid;
  grid-template-columns: 1fr auto 1fr;
  align-items: center;
  height: ${p => (p.$bare ? 15 : 49)}px;
  padding-top: 5px;
  &::before { content: ''; height: 1px; background: ${p => (p.$bare ? 'transparent' : p.$c || '#dddddd')}; }
`;
const DivEnd = styled.span<{ $c?: string; $bare?: boolean }>`
  display: flex;
  align-items: center;
  gap: 8px;
  padding-right: ${p => (p.$c ? 19 : 0)}px;
  color: #e01e5a;
  font-size: 13px;
  font-weight: 700;
  &::before { content: ''; flex: 1; height: 1px; background: ${p => (p.$bare ? 'transparent' : p.$c || '#dddddd')}; }
`;
const DatePill = styled.span`
  height: 30px;
  padding: 0 17px;
  border: 1px solid #d5d5d5;
  border-radius: 15px;
  background: #fff;
  box-shadow: 0 1px 2px rgba(0, 0, 0, 0.1);
  font-size: 13px;
  font-weight: 700;
  line-height: 28px;
`;
const Msg = styled.article`
  display: flex;
  gap: 8px;
  padding: 4px 20px;
`;
const Avatar = styled.svg`
  margin-top: 3px;
  border-radius: 3px;
`;
const Who = styled.div`
  display: flex;
  align-items: baseline;
  gap: 8px;
  height: 22px;
  b { font-weight: 900; }
  time { font-size: 12px; color: #717071; }
`;
const Line = styled.div`
  display: flex;
  align-items: center;
  gap: 4px;
  height: 22px;
  white-space: pre;
  em { font-style: normal; font-size: 13px; color: #868686; }
`;
const Follow = styled.article`
  padding: 4px 20px 4px 64px;
`;
const Composer = styled.div`
  margin: 0 20px 24px;
  border: 1px solid #666;
  border-radius: 4px;
  overflow: hidden;
`;
const ComposeInput = styled.input`
  display: block;
  width: 100%;
  height: 42px;
  && { padding: 0 11px; }
  &::placeholder { color: #a0a0a0; opacity: 1; }
`;
const Tools = styled.div`
  display: flex;
  align-items: center;
  height: 41px;
  padding: 0 3px;
  background: #f8f8f8;
  border-top: 1px solid #ddd;
  color: #616061;
`;
const Tool = styled.button<{ $on?: boolean }>`
  display: grid;
  place-items: center;
  width: 33px;
  height: 32px;
  && { border-radius: 3px; }
  background: ${p => (p.$on ? '#dddddd' : 'transparent')};
  color: ${p => (p.$on ? '#1d1c1d' : 'inherit')};
`;
const Notice = styled.div`
  display: flex;
  align-items: center;
  justify-content: space-between;
  height: 48px;
  padding: 0 16px 0 20px;
  background: #1d1d1d;
  color: #fff;
  font: 900 15px/22px ${LATO};
  a { color: inherit; }
`;

const Person = ({ inv }: { inv?: boolean }) => {
  const [bg, fg] = inv ? ['#e8912d', '#fdf4ea'] : ['#fdf4ea', '#e8912d'];
  return (
    <Avatar width="36" height="36" viewBox="0 0 36 36">
      <rect width="36" height="36" fill={bg} /><circle cx="18" cy="14" r="8" fill={fg} /><path d="M1 36 Q2 24 12 24 H24 Q34 24 35 36Z" fill={fg} />
    </Avatar>
  );
};
const Sad = () => (
  <svg width="21" height="21" viewBox="0 0 21 21"><circle cx="10.500" cy="10.500" r="10" fill="#fdc52f" /><path d="M1 9 A10 10 0 0 1 20 9Z" fill="#f59a23" /><ellipse cx="7" cy="11" rx="1.500" ry="2" fill="#4a2f14" /><ellipse cx="14" cy="11" rx="1.500" ry="2" fill="#4a2f14" /><path d="M6.500 16.500 Q10.500 13 14.500 16.500 M4 7 L8 5.500 M17 7 L13 5.500" stroke="#4a2f14" fill="none" strokeWidth="1.200" /></svg>
);
function Message({ who, at, children }: { who: string; at: string; children: React.ReactNode }) {
  return (
    <Msg><Person inv={who.startsWith('Andreea')} /><div><Who><b>{who}</b><time>{at}</time></Who><Line>{children}</Line></div></Msg>
  );
}
function DateLine({ children, c, bare }: { children: string; c?: string; bare?: boolean }) {
  return <Divider $c={c} $bare={bare}><DatePill>{children}</DatePill><DivEnd $c={c} $bare={bare}>{c ? 'New' : ''}</DivEnd></Divider>;
}

const CallWindow = styled.aside`
  position: absolute;
  right: 29px;
  top: 30px;
  display: flex;
  flex-direction: column;
  align-items: center;
  width: 363px;
  height: 227px;
  padding-top: 74px;
  background: #2b2c33;
  border: 1px solid #1f2026;
  border-top-color: #d9dbdd;
  box-shadow: 0 2px 6px rgba(0, 0, 0, 0.45);
`;
const Initials = styled.div`
  display: grid;
  place-items: center;
  width: 80px;
  height: 80px;
  border: 2px solid #0f78d4;
  border-radius: 50%;
  background: #e5e4ea;
  color: #0f78d4;
  font-size: 20px;
  font-weight: 700;
`;
const CallBtns = styled.div`
  display: flex;
  gap: 20px;
  margin-top: 22px;
`;
const CallBtn = styled.button<{ $bg: string }>`
  display: grid;
  place-items: center;
  width: 40px;
  height: 40px;
  && { border-radius: 50%; }
  background: ${p => p.$bg};
`;

const PdfFav = <Fav $bg="#dc4437">PDF</Fav>;
const GitFav = <FaGithub size={16} color="#24292e" />;
const BTABS = [
  { t: 'Facebook', f: <Fav $bg="#4267b2"><FaFacebookF size={12} /></Fav> },
  { t: 'Lab02.pdf - Google Drive', f: PdfFav },
  { t: 'Lab03.pdf - Google Drive', f: PdfFav },
  { t: 'asabou/NoName', f: GitFav },
  { t: 'asabou/AI-2019-2020', f: GitFav },
  { t: 'Slack | Andreea-Diana Pop, Patc', f: <Fav $bg="#4a154b"><FaSlack size={12} color="#d9bcd9" /></Fav>, on: true },
];
const NAV = [['Threads', MessageSquareText], ['Mentions & reactions', AtSign], ['Drafts', Files], ['Saved items', Bookmark], ['People', BookUser], ['Apps', Grip], ['Files', Layers]] as const;
const FORMATS = [Italic, Strikethrough, CodeXml, Link2, ListOrdered, List, TextQuote, SquareCode];

function Section({ t }: { t: string }) {
  return (
    <SecHead>
      <svg width="9" height="7" viewBox="0 0 9 7"><path d="M0 0 H9 L4.500 7Z" fill="#bba9bc" /></svg>{t}
      <button aria-label={`Add to ${t}`}><Plus size={20} strokeWidth={1.600} /></button>
    </SecHead>
  );
}

function Browser() {
  return (
    <ChromeHalf>
      <TabStrip>
        {BTABS.map((b, i) => (
          <BTab key={b.t} $on={b.on} $sep={i < 4}>{b.f}<span>{b.t}</span><X size={13} strokeWidth={2} /></BTab>
        ))}
        <svg width="38" height="34" viewBox="0 0 38 34"><path d="M15 17 H27 M21 11 V23" stroke="#555a5f" strokeWidth="2" /></svg>
        <WinBtns>
          <svg width="10" height="10" viewBox="0 0 10 10"><path d="M0 5.500 H10" stroke="#666" /></svg>
          <svg width="11" height="11" viewBox="0 0 11 11" fill="none" stroke="#666"><path d="M0.500 2.500 H8 V10.500 H0.500Z M2.500 2.500 V0.500 H10.500 V8 H8" /></svg>
          <svg width="11" height="11" viewBox="0 0 11 11" stroke="#666"><path d="M0 0 L11 11 M11 0 L0 11" /></svg>
        </WinBtns>
      </TabStrip>
      <UrlBar>
        <ArrowLeft size={18} /><ArrowRight size={18} color="#b9bcbf" /><RotateCw size={17} />
        <Address><MdLock size={13} /><span><b>app.slack.com</b>/client/TTSKQLLRY/G010SCFFUKU</span></Address>
        <svg width="14" height="16" viewBox="0 0 14 16" fill="#555a5f"><circle cx="7" cy="2" r="1.700" /><circle cx="7" cy="8" r="1.700" /><circle cx="7" cy="14" r="1.700" /></svg>
      </UrlBar>
      <SlackTop>
        <TopEnd $mr={35}><Clock size={19} /></TopEnd>
        <SlackSearch><input aria-label="Search VVSS2020" placeholder="Search VVSS2020" /><Search size={15} strokeWidth={2.200} /></SlackSearch>
        <TopEnd $mr={16}>
          <svg width="26" height="24" viewBox="0 0 26 24" fill="none" stroke="#d8cdd8" strokeWidth="1.800"><circle cx="13" cy="13" r="8.500" /><path d="M10.500 11 Q11 8.500 13 8.500 Q16 9 15 12 L13 14 M13 16 V18" /><circle cx="21" cy="4" r="4" fill="#fff" stroke="none" /></svg>
        </TopEnd>
      </SlackTop>
      <SlackBody>
        <Side>
          <Team>
            <div>
              <TeamName>VVSS2020 <ChevronDown size={12} strokeWidth={3} /></TeamName>
              <TeamName $me><Dot />Sabou Alexandru Mihai</TeamName>
            </div>
            <Compose aria-label="New message"><SquarePen size={17} strokeWidth={1.800} /></Compose>
          </Team>
          <NavList $pt={13} $pb={13} $line>
            {NAV.map(([t, I]) => <NavItem key={t} $pl={16} $gap={9}><I size={15} />{t}</NavItem>)}
            <NavItem $pl={16} $gap={9} $mt={2}><ArrowUp size={15} />Show less</NavItem>
          </NavList>
          <NavList $pt={12}>
            <Section t="Channels" />
            {['attendances', 'events-announcements', 'labs', 'lectures', 'project', 'seminars'].map(c => <NavItem key={c}><Mark>#</Mark>{c}</NavItem>)}
            <NavItem><Mark>+</Mark>Add a channel</NavItem>
          </NavList>
          <NavList $pt={20}>
            <Section t="Direct messages" />
            <NavItem><FaHeart size={11} color="#2bac76" />Slackbot</NavItem>
            <NavItem $gap={7}><Dot />Sabou Alexandru Mihai <small>(you)</small></NavItem>
            <NavItem $gap={7}><Dot />Andreea-Diana Pop</NavItem>
            <NavItem $on><Badge>2</Badge>Andreea-Diana Pop, Patcas A...</NavItem>
            <NavItem><Mark>+</Mark>Invite people</NavItem>
          </NavList>
          <NavList $pt={20}><Section t="Apps" /></NavList>
        </Side>
        <Main>
          <ChanHead>
            <div>
              <h1>Andreea-Diana Pop, Patcas Andrei Ioan <Star size={14} strokeWidth={1.600} color="#616061" /></h1>
              <p><User size={12} />3</p>
            </div>
            <button>Details</button>
          </ChanHead>
          <Feed>
            <DateLine bare>Thursday, April 9th</DateLine>
            <Message who="Patcas Andrei Ioan" at="4:21 PM">{'Buna ziua! Am o intrebare legata de laboratorul 2. Pentru  cazurile de testare create in test suite-ul din testlink trebuie implementate functii de testare nu?'}</Message>
            <Message who="Patcas Andrei Ioan" at="4:35 PM">Si la a doua parte unde se zice ca se aleg 2 parametri ai functiei testate si se aplica ECP si BVA, acest lucru se va realiza doar in fisierul xls?</Message>
            <DateLine>Friday, April 10th</DateLine>
            <Message who="Andreea-Diana Pop" at="1:39 PM">La lab. 2, mai întâi se completează fiș, Excel, pe baza criteriilor de acolo se creează teste în inteliJ și apoi pt. fiecare test se va crea în TestLink un caz de test. Deci, ordinea e cam pe dos.</Message>
            <Follow>Să mă contactați pe Skype când doriți să predați lab.3, dacă nu sunt implicată în altă conversație, vă voi răspunde.</Follow>
            <Message who="Patcas Andrei Ioan" at="8:47 PM">Ok, am inteles. Multumesc!</Message>
            <DateLine c="#f08fb0">Today</DateLine>
            <Message who="Andreea-Diana Pop" at="2:38 PM">Pt. lab2,</Message>
            <Follow>în Excel, fila BVA de corectat - să apară corelat doar ce e corelat</Follow>
            <Follow><Line>în ultima filă, să se vadă care sunt cele 5 testate; dacă sunt identice BVA ECP, să se specifice acest lucru <em>(edited)</em></Line></Follow>
            <Follow>În InteliJ de verificat că s-a realizat adăugarea (nu doar că nu se prinde excepția)</Follow>
            <Message who="Andreea-Diana Pop" at="2:51 PM">în TestLink lipsește numele pachetului, respectiv pachet+clasă# (pt. metodă)</Message>
            <Follow>să adăugați capturi de ecran aici</Follow>
            <Follow><Line>La lab. 3 trebuie 5 regiuni<Sad /></Line></Follow>
            <Follow>la lab. 3, atenție la loop</Follow>
            <Follow>testlink aceleași obs.</Follow>
            <Follow>să mă anunțați când ați updatat lab3 pe Git.</Follow>
          </Feed>
          <Composer>
            <ComposeInput aria-label="Message" placeholder="Message Andreea-Diana Pop, Patcas Andrei Ioan" />
            <Tools>
              <Tool aria-label="Shortcuts"><Zap size={16} strokeWidth={1.600} /></Tool><Rule $h={24} /><Spacer $w={6} />
              <Tool aria-label="Bold"><Bold size={15} strokeWidth={3} /></Tool>
              {FORMATS.map((I, i) => <Tool key={i} aria-label="Format"><I size={16} strokeWidth={1.800} /></Tool>)}
              <Spacer />
              <Tool $on>Aa</Tool>
              <Tool aria-label="Mention"><AtSign size={16} strokeWidth={1.600} /></Tool>
              <Tool aria-label="Emoji"><Smile size={16} strokeWidth={1.600} /></Tool>
              <Tool aria-label="Attach"><Paperclip size={16} strokeWidth={1.600} /></Tool>
            </Tools>
          </Composer>
        </Main>
      </SlackBody>
      <Notice>
        <span>Slack needs your permission to <a href="#notifications">enable desktop notifications</a>.</span>
        <X size={16} strokeWidth={2} color="#ccc" />
      </Notice>
      <TaskbarBox $h={40}>
        <TaskSlot $w={48} $h={40} aria-label="Start"><FaWindows size={16} color="#fff" /></TaskSlot>
        <TaskSlot $w={48} $h={40} aria-label="Search"><Magnifier size={17} strokeWidth={1.600} /></TaskSlot>
        <TaskSlot $w={48} $h={40} aria-label="Task view"><TaskViewIcon s={16} /></TaskSlot>
        <Spacer $w={2} />
        {APPS.map(a => (
          <TaskSlot key={a.n} $w={49} $h={40} $bg={a.bg} $line={a.run ? (a.hot ? '#ff7a1a' : '#76b9ed') : undefined} $lineW={a.bg ? 49 : 40} aria-label={a.n}><a.I s={22} /></TaskSlot>
        ))}
        <SmallTray $pr={5}><TrayText $s={12} $lh={19}>3:34 PM<br />16-Apr-20</TrayText></SmallTray>
      </TaskbarBox>
    </ChromeHalf>
  );
}

function Call() {
  return (
    <CallWindow>
      <Initials>AP</Initials>
      <CallBtns>
        <CallBtn $bg="#fff" aria-label="Mute"><svg width="20" height="24" viewBox="0 0 20 24" fill="none" stroke="#2b2c33" strokeWidth="1.500"><rect x="6" y="1" width="8" height="15" rx="4" /><path d="M2 12 Q2 20 10 20 Q18 20 18 12 M10 20 V24" /></svg></CallBtn>
        <CallBtn $bg="transparent" aria-label="Camera off"><svg width="26" height="24" viewBox="0 0 26 24" fill="none" stroke="#fff" strokeWidth="1.500"><path d="M3 4 H18 V20 H3Z M18 12 L24 6 V18Z M1 23 L23 1" /></svg></CallBtn>
        <CallBtn $bg="#f44336" aria-label="Hang up"><svg width="24" height="12" viewBox="0 0 24 12" fill="none" stroke="#fff" strokeWidth="1.700"><path d="M1 8 Q2 1 12 1 Q22 1 23 8 Q22 12 17 10 V7 Q12 5 7 7 V10 Q2 12 1 8Z" /></svg></CallBtn>
        <CallBtn $bg="#fff" aria-label="Pop out"><svg width="21" height="22" viewBox="0 0 21 22" fill="none" stroke="#2b2c33" strokeWidth="1.600"><path d="M1 8 H14 V21 H1Z M7 8 V1 H20 V15 H14" /></svg></CallBtn>
      </CallBtns>
    </CallWindow>
  );
}

export default function App() {
  return (
    <Desktops>
      <Global />
      <Excel />
      <Browser />
      <Call />
    </Desktops>
  );
}
